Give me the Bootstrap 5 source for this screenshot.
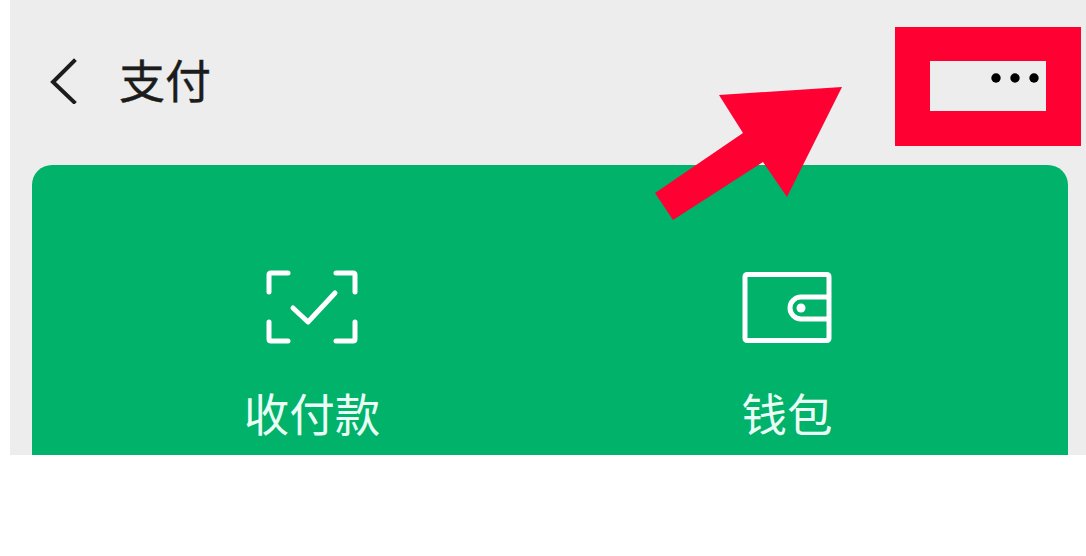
<!DOCTYPE html>
<html lang="zh-CN">
<head>
<meta charset="utf-8">
<title>支付</title>
<link href="https://cdn.jsdelivr.net/npm/bootstrap@5.3.0/dist/css/bootstrap.min.css" rel="stylesheet">
<style>
html,body{height:100%;overflow:hidden;background:#fff}
body{font-family:"Noto Sans CJK SC","Liberation Sans",sans-serif}
.shot{margin-left:10px;height:455px;background:#ededed;overflow:hidden}
.topbar{height:165px;padding:0 0 10px 38px}
.back-ico{width:30px;height:46px;margin-right:41px;position:relative;top:3px}
.page-title{font-size:46px;line-height:1;color:#1c1c1c;font-weight:400;margin:0;-webkit-text-stroke:.4px #1c1c1c}
.pay-card{margin:0 18px 0 22px;height:320px;background:#00b26a;border-radius:20px;padding:103px 0 0 180px;gap:275px}
.pay-item{width:200px;color:#fff}
.pay-ico{width:96px;height:76px}
.pay-label{font-size:45.5px;line-height:1;margin-top:46px;color:#eafff5}
.mark-box{position:absolute;left:895px;top:27px;width:186px;height:119px;border:solid #ff0033;border-width:34px 35px 35px}
.mark-dots{position:absolute;left:0;top:0;width:116px;height:50px}
.mark-arrow{position:absolute;left:650px;top:80px;width:200px;height:145px}
</style>
</head>
<body>
<div class="shot">
  <div class="topbar d-flex align-items-center">
    <svg class="back-ico" viewBox="0 0 30 46" fill="none" stroke="#1c1c1c" stroke-width="4" stroke-linecap="square"><path d="M26 3 L5 24 L26 44"/></svg>
    <h1 class="page-title">支付</h1>
  </div>
  <div class="pay-card d-flex align-items-start">
    <div class="pay-item d-flex flex-column align-items-center">
      <svg class="pay-ico" viewBox="0 0 96 76" fill="none" stroke="#fff" stroke-width="5" stroke-linecap="round" stroke-linejoin="round">
        <path d="M24 5 H7 Q5 5 5 7 V24"/><path d="M72 5 H89 Q91 5 91 7 V24"/>
        <path d="M5 54 V71 Q5 73 7 73 H24"/><path d="M91 54 V71 Q91 73 89 73 H72"/>
        <path d="M29 40 L44 54 L71 25"/>
      </svg>
      <div class="pay-label">收付款</div>
    </div>
    <div class="pay-item d-flex flex-column align-items-center">
      <svg class="pay-ico" viewBox="0 0 96 76" fill="none" stroke="#fff" stroke-width="5" stroke-linejoin="round">
        <rect x="6" y="6.5" width="84" height="66" rx="2"/>
        <path d="M90 29 H62 A11 11 0 0 0 62 51 H90"/>
        <circle cx="62" cy="40" r="4.5" fill="#fff" stroke="none"/>
      </svg>
      <div class="pay-label">钱包</div>
    </div>
  </div>
</div>
<svg class="mark-arrow" viewBox="650 80 200 145"><polygon fill="#ff0033" points="719,95 842,87 787,197 763,162 673,220 655,193 743,133"/></svg>
<div class="mark-box">
  <svg class="mark-dots" viewBox="930 61 116 50"><circle cx="996" cy="78" r="4.7"/><circle cx="1015" cy="78" r="4.7"/><circle cx="1034" cy="78" r="4.7"/></svg>
</div>
<script src="https://cdn.jsdelivr.net/npm/bootstrap@5.3.0/dist/js/bootstrap.bundle.min.js"></script>
</body>
</html>
